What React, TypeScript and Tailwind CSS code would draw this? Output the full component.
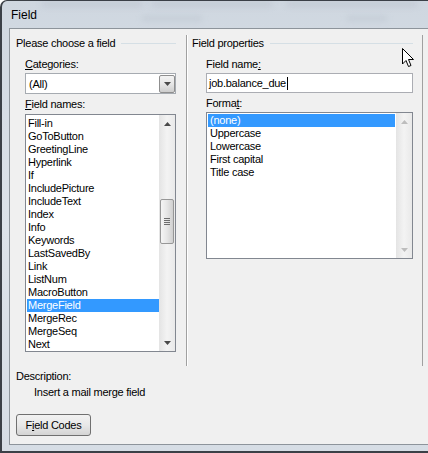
import { FC } from 'react';

const fieldNames = [
  'Fill-in',
  'GoToButton',
  'GreetingLine',
  'Hyperlink',
  'If',
  'IncludePicture',
  'IncludeText',
  'Index',
  'Info',
  'Keywords',
  'LastSavedBy',
  'Link',
  'ListNum',
  'MacroButton',
  'MergeField',
  'MergeRec',
  'MergeSeq',
  'Next',
];

const formats = ['(none)', 'Uppercase', 'Lowercase', 'First capital', 'Title case'];

const Arrow: FC<{ up?: boolean; dim?: boolean }> = ({ up, dim }) => (
  <svg width="7" height="4" viewBox="0 0 7 4" className="block">
    <path d={up ? 'M3.5 0 L7 4 L0 4 Z' : 'M0 0 L7 0 L3.5 4 Z'} fill={dim ? '#bdbdbd' : '#4a4a4a'} />
  </svg>
);

const ScrollBar: FC<{ thumb?: boolean; dim?: boolean }> = ({ thumb, dim }) => (
  <div className="w-[16px] h-full flex flex-col items-center bg-gradient-to-r from-[#e4e4e4] via-[#f3f3f3] to-[#e9e9e9]">
    <div className="h-[17px] flex items-center justify-center pt-[1px]">
      <Arrow up dim={dim} />
    </div>
    <div className="flex-1 w-full px-[1px]">
      {thumb && (
        <div className="mt-[67px] h-[45px] rounded-[2px] border border-[#979797] bg-gradient-to-r from-[#f5f5f5] via-[#e6e6e6] to-[#cfcfcf] flex flex-col items-center justify-center gap-[1px]">
          <div className="w-[6px] h-px bg-[#6d6d6d]" />
          <div className="w-[6px] h-px bg-[#6d6d6d]" />
          <div className="w-[6px] h-px bg-[#6d6d6d]" />
          <div className="w-[6px] h-px bg-[#6d6d6d]" />
        </div>
      )}
    </div>
    <div className="h-[17px] flex items-center justify-center">
      <Arrow dim={dim} />
    </div>
  </div>
);

const SectionHead: FC<{ title: string }> = ({ title }) => (
  <div className="h-[14px] flex items-center">
    <span className="leading-[14px] whitespace-nowrap">{title}</span>
    <div className="flex-1 h-px bg-[#d5dfe5] ml-[6px]" />
  </div>
);

const App: FC = () => {
  return (
    <div className="relative w-[428px] h-[453px] overflow-hidden flex flex-col bg-gradient-to-b from-[#cfd7e0] via-[#dde3ea] to-[#d6dde5] border-l-2 border-t border-b-2 border-[#3b4047] rounded-tl-[7px] text-[11px] tracking-[-0.25px] text-black font-['Liberation_Sans',Arial,sans-serif]">
      {/* title bar */}
      <div className="h-[27px] relative flex items-center pl-[9px]">
        <div className="absolute left-[40px] top-[1px] w-[100px] h-[4px] bg-[#b4bcc6] opacity-60 blur-[3px]" />
        <div className="absolute left-[150px] top-[1px] w-[120px] h-[4px] bg-[#b4bcc6] opacity-60 blur-[3px]" />
        <div className="absolute left-[285px] top-[1px] w-[130px] h-[4px] bg-[#b4bcc6] opacity-60 blur-[3px]" />
        <div className="absolute left-[140px] top-[15px] w-[60px] h-[5px] bg-[#bcc5cf] opacity-60 blur-[3px]" />
        <div className="absolute left-[345px] top-[15px] w-[40px] h-[5px] bg-[#bcc5cf] opacity-60 blur-[3px]" />
        <span className="relative text-[12px] tracking-normal leading-[14px] pt-[1px]">Field</span>
      </div>

      {/* frame */}
      <div className="flex-1 flex pl-[7px] pb-[6px]">
        <div className="flex-1 flex flex-col bg-[#f0f0f0] border-t border-l border-b border-[#8d949b]">
          <div className="h-[337px] flex">
            {/* left column */}
            <div className="ml-[6px] w-[160px] pt-[7px] flex flex-col">
              <SectionHead title="Please choose a field" />
              <div className="mt-[7px] pl-[9px] leading-[14px]">
                <span className="underline">C</span>ategories:
              </div>
              <div className="mt-[2px] ml-[9px] h-[21px] border border-[#a6abb1] bg-white flex items-center">
                <span className="flex-1 pl-[3px] leading-[14px]">(All)</span>
                <div className="h-[18px] w-[16px] border border-[#8f8f8f] rounded-[2px] bg-gradient-to-b from-[#f3f3f3] via-[#e6e6e6] to-[#cdcdcd] flex items-center justify-center">
                  <Arrow />
                </div>
              </div>
              <div className="mt-[3px] pl-[9px] leading-[14px]">
                <span className="underline">F</span>ield names:
              </div>
              <div className="mt-[3px] ml-[9px] h-[238px] border border-[#828790] bg-white flex overflow-hidden">
                <div className="flex-1 pt-[2px] pl-[1px]">
                  {fieldNames.map((name) => (
                    <div
                      key={name}
                      className={
                        name === 'MergeField'
                          ? 'h-[13px] leading-[13px] pl-[1px] bg-[#3399ff] text-white'
                          : 'h-[13px] leading-[13px] pl-[1px]'
                      }
                    >
                      {name}
                    </div>
                  ))}
                </div>
                <ScrollBar thumb />
              </div>
            </div>

            {/* separator */}
            <div className="ml-[10px] mt-[6px] w-px bg-[#a0a0a0]" />
            <div className="mt-[6px] w-px bg-white" />

            {/* right column */}
            <div className="ml-[4px] w-[221px] pt-[7px] flex flex-col">
              <SectionHead title="Field properties" />
              <div className="mt-[7px] pl-[14px] leading-[14px]">
                Field name<span className="underline">:</span>
              </div>
              <div className="mt-[2px] ml-[14px] h-[20px] border border-[#abadb3] bg-white flex items-center pl-[2px]">
                <span className="leading-[14px]">job.balance_due</span>
                <div className="w-px h-[13px] bg-black ml-[1px]" />
              </div>
              <div className="mt-[3px] pl-[14px] leading-[14px]">
                Forma<span className="underline">t</span>:
              </div>
              <div className="mt-[2px] ml-[14px] h-[147px] border border-[#828790] bg-white flex">
                <div className="flex-1 pt-[1px] pl-[1px] pr-[1px]">
                  {formats.map((f, i) => (
                    <div
                      key={f}
                      className={
                        i === 0
                          ? 'h-[13px] leading-[13px] pl-[2px] bg-[#3399ff] text-white'
                          : 'h-[13px] leading-[13px] pl-[2px]'
                      }
                    >
                      {f}
                    </div>
                  ))}
                </div>
                <ScrollBar dim />
              </div>
            </div>

            <div className="ml-[9px] mt-[6px] w-px bg-[#a0a0a0]" />
          </div>

          {/* description */}
          <div className="mt-[3px] pl-[6px] leading-[14px]">Description:</div>
          <div className="mt-[2px] pl-[24px] leading-[14px]">Insert a mail merge field</div>
          <div className="mt-[15px] ml-[6px] w-[75px] h-[22px] rounded-[3px] border border-[#707070] bg-gradient-to-b from-[#f2f2f2] via-[#e8e8e8] to-[#d4d4d4] flex items-center justify-center leading-[14px]">
            F<span className="underline">i</span>eld Codes
          </div>
        </div>
      </div>

      {/* mouse pointer */}
      <svg className="absolute left-[400px] top-[47px]" width="13" height="20" viewBox="0 0 13 20">
        <path d="M0.5 0.5 L0.5 16 L4 12.5 L6.5 18.5 L9 17.5 L6.5 11.5 L11.5 11.5 Z" fill="#fff" stroke="#000" strokeWidth="1" />
      </svg>
    </div>
  );
};

export default App;
